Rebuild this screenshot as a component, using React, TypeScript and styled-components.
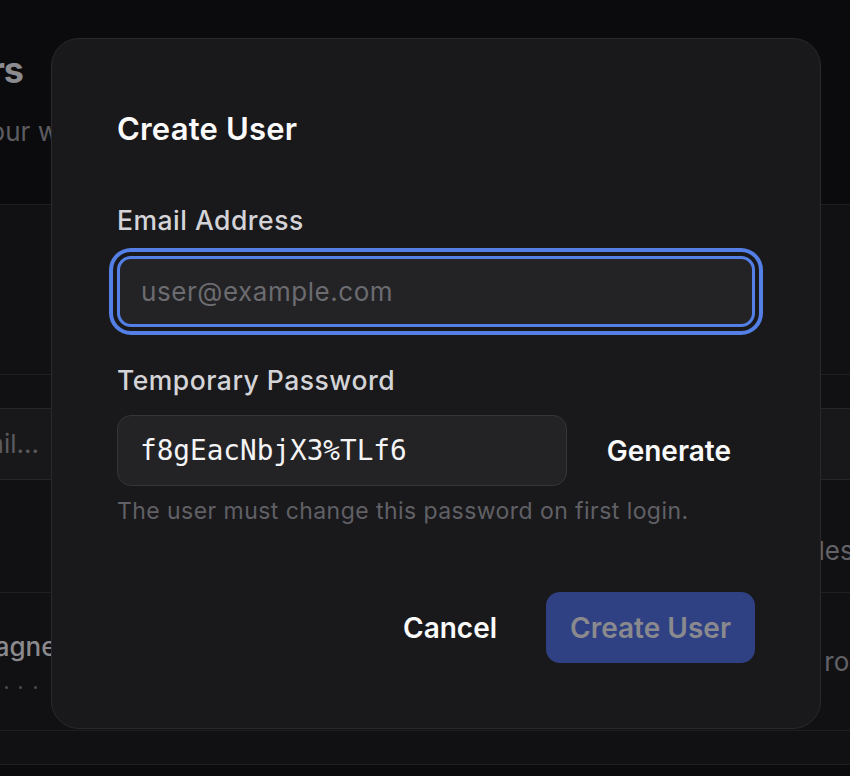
import React from "react";
import styled, { createGlobalStyle } from "styled-components";

const GlobalStyle = createGlobalStyle`
  html, body { margin: 0; padding: 0; background: #0b0b0d; overflow: hidden; }
  body { font-family: "Inter", "Liberation Sans", sans-serif; -webkit-font-smoothing: antialiased; }
  * { box-sizing: border-box; }
`;

/* ---------- background page ---------- */
const Page = styled.div`
  height: 776px;
  overflow: hidden;
  background: #0b0b0d;
  display: flex;
  flex-direction: column;
`;

const PageHeader = styled.header`
  flex: none;
  height: 205px;
  border-bottom: 1px solid #1d1d20;
  padding-top: 50px;
  display: flex;
  flex-direction: column;
  gap: 29px;
`;

const PageTitle = styled.h1`
  margin: 0;
  width: 23px;
  display: flex;
  justify-content: flex-end;
  white-space: nowrap;
  font-size: 36px;
  line-height: 40px;
  letter-spacing: -1px;
  font-weight: 700;
  color: #8c8c90;
`;

const PageSubtitle = styled.p`
  margin: 0 0 0 -131px;
  white-space: nowrap;
  font-size: 26px;
  line-height: 26px;
  color: #5c5c61;
`;

const Panel = styled.section<{ $h: number; $pad?: number }>`
  flex: none;
  height: ${(p) => p.$h}px;
  padding-top: ${(p) => p.$pad ?? 0}px;
  background: #111113;
  border-bottom: 1px solid #1f1f22;
`;

const SearchField = styled.div`
  height: 72px;
  background: #18181a;
  border-top: 1px solid #252528;
  border-bottom: 1px solid #252528;
  display: flex;
  align-items: center;
`;

const SearchPlaceholder = styled.span`
  width: 39px;
  display: flex;
  justify-content: flex-end;
  white-space: nowrap;
  font-size: 26px;
  line-height: 26px;
  color: #5a5a5f;
`;

const TableRow = styled.div<{ $h: number; $pad?: number }>`
  flex: none;
  height: ${(p) => p.$h}px;
  padding-top: ${(p) => p.$pad ?? 0}px;
  background: #111113;
  border-bottom: 1px solid #1f1f22;
  display: grid;
  grid-template-columns: 734px 1fr;
  align-items: center;
`;

const UserCell = styled.div`
  display: flex;
  flex-direction: column;
  gap: 26px;
`;

const UserName = styled.span`
  margin-left: -30px;
  white-space: nowrap;
  font-size: 26px;
  line-height: 26px;
  font-weight: 500;
  color: #8a8a8e;
`;

const MaskRow = styled.div`
  display: flex;
  gap: 11.5px;
  margin-left: 4.5px;
`;

const MaskDot = styled.span`
  width: 3px;
  height: 3px;
  border-radius: 50%;
  background: #4b4b50;
`;

const RoleText = styled.span<{ $indent?: number }>`
  padding-left: ${(p) => p.$indent ?? 0}px;
  white-space: nowrap;
  font-size: 26px;
  line-height: 26px;
  color: #626267;
`;

/* ---------- dialog ---------- */
const Overlay = styled.div`
  position: fixed;
  inset: 0;
  display: flex;
  align-items: flex-start;
  padding: 38px 0 0 51px;
`;

const Dialog = styled.div`
  width: 770px;
  height: 691px;
  background: #19191b;
  border: 1px solid #2a2a2e;
  border-radius: 28px;
  padding: 75px 65px 65px;
  display: flex;
  flex-direction: column;
`;

const DialogTitle = styled.h2`
  margin: 0 0 63px;
  font-size: 31px;
  line-height: 30px;
  font-weight: 600;
  letter-spacing: 0.2px;
  color: #fafafa;
`;

const Field = styled.div<{ $mt?: number }>`
  display: flex;
  flex-direction: column;
  gap: 22.5px;
  margin-top: ${(p) => p.$mt ?? 0}px;
`;

const Label = styled.label`
  font-size: 26.5px;
  line-height: 26px;
  font-weight: 500;
  letter-spacing: 0.5px;
  color: #d4d4d8;
`;

const TextInput = styled.input<{ $focused?: boolean; $mono?: boolean }>`
  height: 71px;
  width: 100%;
  min-width: 0;
  border-radius: 14px;
  background: #232326;
  outline: none;
  color: #f4f4f5;
  border: ${(p) => (p.$focused ? "3px solid #547fe6" : "1px solid #36363a")};
  padding-left: ${(p) => (p.$focused ? 21 : 22)}px;
  box-shadow: ${(p) => (p.$focused ? "0 0 0 4px #19191b, 0 0 0 8px #547fe6" : "none")};
  font-family: ${(p) =>
    p.$mono ? '"DejaVu Sans Mono", "Liberation Mono", monospace' : '"Inter", "Liberation Sans", sans-serif'};
  font-size: ${(p) => (p.$mono ? "27.7px" : "26px")};
  letter-spacing: ${(p) => (p.$mono ? "0" : "0.55px")};
  &::placeholder { color: #6b6b70; }
`;

const InputRow = styled.div`
  display: flex;
  align-items: center;
  gap: 16px;
`;

const Button = styled.button<{ $primary?: boolean }>`
  flex: none;
  height: 71px;
  padding: 0 24px;
  border: none;
  border-radius: 14px;
  font-family: "Inter", "Liberation Sans", sans-serif;
  font-size: 28px;
  font-weight: 600;
  cursor: pointer;
  background: ${(p) => (p.$primary ? "#2f4183" : "transparent")};
  color: ${(p) => (p.$primary ? "#8a8a8e" : "#fafafa")};
`;

const Hint = styled.p`
  margin: 14px 0 0;
  font-size: 23px;
  line-height: 23px;
  letter-spacing: 0.44px;
  color: #606066;
`;

const Footer = styled.div`
  margin-top: auto;
  display: flex;
  justify-content: flex-end;
  gap: 25px;
`;

export default function App() {
  return (
    <>
      <GlobalStyle />
      <Page>
        <PageHeader>
          <PageTitle>Users</PageTitle>
          <PageSubtitle>Manage your workspace members and their roles</PageSubtitle>
        </PageHeader>
        <Panel $h={170} />
        <Panel $h={105} $pad={33}>
          <SearchField>
            <SearchPlaceholder>Search by email...</SearchPlaceholder>
          </SearchField>
        </Panel>
        <TableRow $h={113} $pad={29}>
          <span />
          <RoleText $indent={17}>No roles</RoleText>
        </TableRow>
        <TableRow $h={138}>
          <UserCell>
            <UserName>Wagner</UserName>
            <MaskRow>
              <MaskDot />
              <MaskDot />
              <MaskDot />
            </MaskRow>
          </UserCell>
          <RoleText>Assign role</RoleText>
        </TableRow>
        <TableRow $h={34} />
      </Page>
      <Overlay>
        <Dialog role="dialog" aria-labelledby="create-user-title">
          <DialogTitle id="create-user-title">Create User</DialogTitle>
          <Field>
            <Label htmlFor="email">Email Address</Label>
            <TextInput id="email" $focused placeholder="user@example.com" />
          </Field>
          <Field $mt={40}>
            <Label htmlFor="pw">Temporary Password</Label>
            <InputRow>
              <TextInput id="pw" $mono readOnly value="f8gEacNbjX3%TLf6" />
              <Button>Generate</Button>
            </InputRow>
          </Field>
          <Hint>The user must change this password on first login.</Hint>
          <Footer>
            <Button>Cancel</Button>
            <Button $primary disabled>
              Create User
            </Button>
          </Footer>
        </Dialog>
      </Overlay>
    </>
  );
}
